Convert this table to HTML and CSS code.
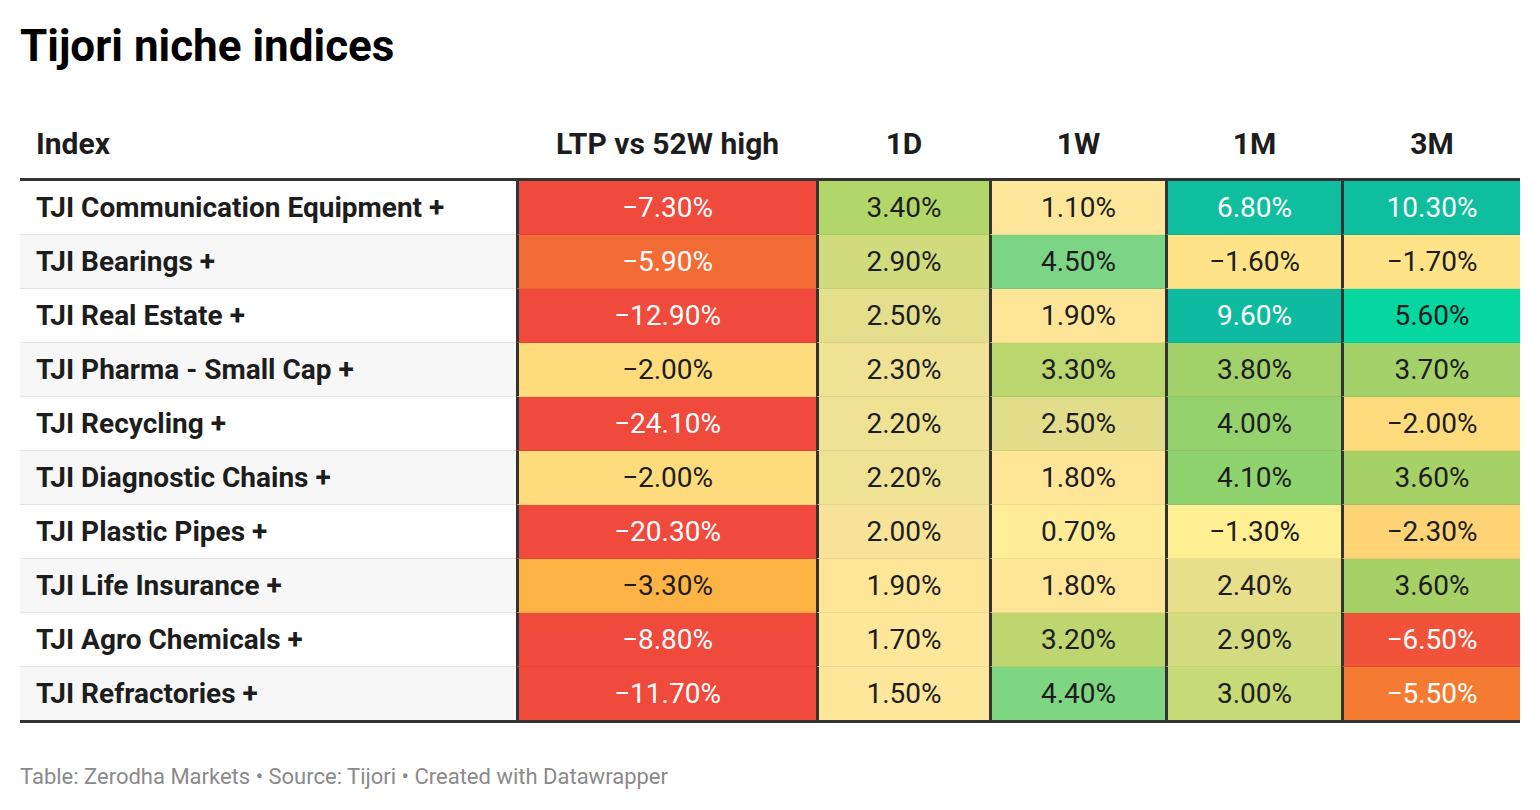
FILE: index.html
```html
<!DOCTYPE html>
<html lang="en">
<head>
<meta charset="utf-8">
<title>Tijori niche indices</title>
<link rel="stylesheet" href="styles.css">
</head>
<body>
<div class="chart">
  <h1 class="title">Tijori niche indices</h1>
  <table class="tbl">
    <colgroup>
      <col class="c-index"><col class="c-ltp"><col class="c-d"><col class="c-w"><col class="c-m"><col class="c-3m">
    </colgroup>
    <thead>
      <tr>
        <th class="h-left">Index</th>
        <th>LTP vs 52W high</th>
        <th>1D</th>
        <th>1W</th>
        <th>1M</th>
        <th>3M</th>
      </tr>
    </thead>
    <tbody>
      <tr>
        <td class="name">TJI Communication Equipment +</td>
        <td class="v w" style="background:#ef4a3c">−7.30%</td>
        <td class="v" style="background:#b3d66b">3.40%</td>
        <td class="v" style="background:#fee79a">1.10%</td>
        <td class="v w" style="background:#0fbd9f">6.80%</td>
        <td class="v w" style="background:#0fbd9f">10.30%</td>
      </tr>
      <tr class="alt">
        <td class="name">TJI Bearings +</td>
        <td class="v w" style="background:#f46c35">−5.90%</td>
        <td class="v" style="background:#d0db7e">2.90%</td>
        <td class="v" style="background:#7bd585">4.50%</td>
        <td class="v" style="background:#fee389">−1.60%</td>
        <td class="v" style="background:#fee389">−1.70%</td>
      </tr>
      <tr>
        <td class="name">TJI Real Estate +</td>
        <td class="v w" style="background:#ef4a3c">−12.90%</td>
        <td class="v" style="background:#e4df8d">2.50%</td>
        <td class="v" style="background:#fee598">1.90%</td>
        <td class="v w" style="background:#0fbba0">9.60%</td>
        <td class="v" style="background:#06d6a0">5.60%</td>
      </tr>
      <tr class="alt">
        <td class="name">TJI Pharma - Small Cap +</td>
        <td class="v" style="background:#fedc7d">−2.00%</td>
        <td class="v" style="background:#efe295">2.30%</td>
        <td class="v" style="background:#b9d66f">3.30%</td>
        <td class="v" style="background:#a2d16a">3.80%</td>
        <td class="v" style="background:#a4d169">3.70%</td>
      </tr>
      <tr>
        <td class="name">TJI Recycling +</td>
        <td class="v w" style="background:#ef4a3c">−24.10%</td>
        <td class="v" style="background:#f0e295">2.20%</td>
        <td class="v" style="background:#e2dd8b">2.50%</td>
        <td class="v" style="background:#95d26d">4.00%</td>
        <td class="v" style="background:#fedc7d">−2.00%</td>
      </tr>
      <tr class="alt">
        <td class="name">TJI Diagnostic Chains +</td>
        <td class="v" style="background:#fedc7d">−2.00%</td>
        <td class="v" style="background:#f0e295">2.20%</td>
        <td class="v" style="background:#fee598">1.80%</td>
        <td class="v" style="background:#8fd36f">4.10%</td>
        <td class="v" style="background:#a6d167">3.60%</td>
      </tr>
      <tr>
        <td class="name">TJI Plastic Pipes +</td>
        <td class="v w" style="background:#ef4a3c">−20.30%</td>
        <td class="v" style="background:#f8e498">2.00%</td>
        <td class="v" style="background:#feec98">0.70%</td>
        <td class="v" style="background:#feef93">−1.30%</td>
        <td class="v" style="background:#fed477">−2.30%</td>
      </tr>
      <tr class="alt">
        <td class="name">TJI Life Insurance +</td>
        <td class="v" style="background:#fdb444">−3.30%</td>
        <td class="v" style="background:#fee598">1.90%</td>
        <td class="v" style="background:#fee598">1.80%</td>
        <td class="v" style="background:#e8df8c">2.40%</td>
        <td class="v" style="background:#a6d167">3.60%</td>
      </tr>
      <tr>
        <td class="name">TJI Agro Chemicals +</td>
        <td class="v w" style="background:#ef4a3c">−8.80%</td>
        <td class="v" style="background:#fee69a">1.70%</td>
        <td class="v" style="background:#bed66f">3.20%</td>
        <td class="v" style="background:#d2db80">2.90%</td>
        <td class="v w" style="background:#f0533a">−6.50%</td>
      </tr>
      <tr class="alt last">
        <td class="name">TJI Refractories +</td>
        <td class="v w" style="background:#ef4a3c">−11.70%</td>
        <td class="v" style="background:#fee79b">1.50%</td>
        <td class="v" style="background:#7ed582">4.40%</td>
        <td class="v" style="background:#c8da78">3.00%</td>
        <td class="v w" style="background:#f57a32">−5.50%</td>
      </tr>
    </tbody>
  </table>
  <p class="footer">Table: Zerodha Markets • Source: Tijori • Created with Datawrapper</p>
</div>
</body>
</html>
```

FILE: styles.css
```css
* { box-sizing: border-box; }

html, body {
  margin: 0;
  padding: 0;
  background: #ffffff;
}

body {
  font-family: Roboto, "Liberation Sans", sans-serif;
  color: #1d1d1d;
}

.chart {
  padding: 20px 20px 0 20px;
  width: 1540px;
}

.title {
  margin: 0;
  font-size: 44px;
  line-height: 52px;
  font-weight: 700;
  color: #000000;
}

.tbl {
  margin-top: 39px;
  width: 1500px;
  border-collapse: separate;
  border-spacing: 0;
  table-layout: fixed;
  border-bottom: 3px solid #333333;
}

.c-index { width: 496px; }
.c-ltp { width: 300px; }
.c-d { width: 173px; }
.c-w { width: 176px; }
.c-m { width: 176px; }
.c-3m { width: 179px; }

.tbl th {
  height: 70px;
  padding: 0 0 3px 3px;
  font-size: 30px;
  font-weight: 700;
  text-align: center;
  vertical-align: middle;
  color: #1d1d1d;
  border-bottom: 3px solid #333333;
  white-space: nowrap;
}

.tbl th.h-left {
  text-align: left;
  padding-left: 16px;
}

.tbl td {
  height: 54px;
  padding: 0;
  vertical-align: middle;
  white-space: nowrap;
}

.tbl td.name {
  padding-left: 16px;
  font-size: 28px;
  font-weight: 700;
  color: #1d1d1d;
  background: #ffffff;
  border-bottom: 1px solid #e5e5e5;
}

.tbl tr.alt td.name {
  background: #f7f7f7;
}

.tbl td.v {
  border-left: 3px solid #333333;
  border-bottom: 1px solid rgba(0, 0, 0, 0.06);
  text-align: center;
  font-size: 28px;
  font-weight: 400;
  color: #1d1d1d;
}

.tbl td.w {
  color: #ffffff;
}

.tbl tr.last td {
  height: 53px;
  border-bottom: none;
}

.footer {
  margin: 42px 0 0 0;
  font-size: 22px;
  line-height: 24px;
  color: #8a8a8a;
}
```
